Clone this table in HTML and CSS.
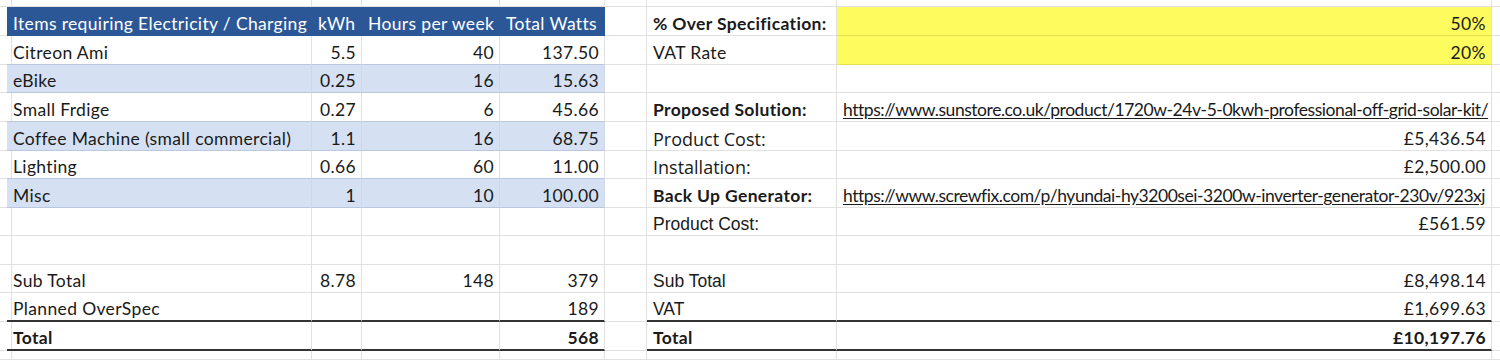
FILE: index.html
```html
<!DOCTYPE html>
<html lang="en">
<head>
<meta charset="utf-8">
<title>Solar sizing</title>
<link rel="stylesheet" href="styles.css">
</head>
<body>
<div class="sheet">
  <div class="row top">
    <div class="c"></div><div class="c"></div><div class="c"></div><div class="c"></div><div class="c"></div><div class="c"></div><div class="c"></div><div class="c"></div><div class="c"></div>
  </div>
  <div class="row h29">
    <div class="c"></div>
    <div class="c hd">Items requiring Electricity / Charging</div>
    <div class="c hd">kWh</div>
    <div class="c hd">Hours per week</div>
    <div class="c hd">Total Watts</div>
    <div class="c"></div>
    <div class="c b">% Over Specification:</div>
    <div class="c n yel">50%</div>
    <div class="c"></div>
  </div>
  <div class="row h29">
    <div class="c"></div>
    <div class="c wt">Citreon Ami</div>
    <div class="c wt n">5.5</div>
    <div class="c wt n">40</div>
    <div class="c wt n">137.50</div>
    <div class="c"></div>
    <div class="c">VAT Rate</div>
    <div class="c n yel">20%</div>
    <div class="c"></div>
  </div>
  <div class="row h28">
    <div class="c"></div>
    <div class="c band">eBike</div>
    <div class="c band n">0.25</div>
    <div class="c band n">16</div>
    <div class="c band n">15.63</div>
    <div class="c"></div>
    <div class="c"></div>
    <div class="c"></div>
    <div class="c"></div>
  </div>
  <div class="row h29">
    <div class="c"></div>
    <div class="c wt">Small Frdige</div>
    <div class="c wt n">0.27</div>
    <div class="c wt n">6</div>
    <div class="c wt n">45.66</div>
    <div class="c"></div>
    <div class="c b">Proposed Solution:</div>
    <div class="c"><span class="link">https://www.sunstore.co.uk/product/1720w-24v-5-0kwh-professional-off-grid-solar-kit/</span></div>
    <div class="c"></div>
  </div>
  <div class="row h29">
    <div class="c"></div>
    <div class="c band">Coffee Machine (small commercial)</div>
    <div class="c band n">1.1</div>
    <div class="c band n">16</div>
    <div class="c band n">68.75</div>
    <div class="c"></div>
    <div class="c os">Product Cost:</div>
    <div class="c n">£5,436.54</div>
    <div class="c"></div>
  </div>
  <div class="row h28">
    <div class="c"></div>
    <div class="c wt">Lighting</div>
    <div class="c wt n">0.66</div>
    <div class="c wt n">60</div>
    <div class="c wt n">11.00</div>
    <div class="c"></div>
    <div class="c os">Installation:</div>
    <div class="c n">£2,500.00</div>
    <div class="c"></div>
  </div>
  <div class="row h29">
    <div class="c"></div>
    <div class="c band">Misc</div>
    <div class="c band n">1</div>
    <div class="c band n">10</div>
    <div class="c band n">100.00</div>
    <div class="c"></div>
    <div class="c b">Back Up Generator:</div>
    <div class="c"><span class="link">https://www.screwfix.com/p/hyundai-hy3200sei-3200w-inverter-generator-230v/923xj</span></div>
    <div class="c"></div>
  </div>
  <div class="row h28">
    <div class="c"></div><div class="c"></div><div class="c"></div><div class="c"></div><div class="c"></div><div class="c"></div>
    <div class="c ar">Product Cost:</div>
    <div class="c n">£561.59</div>
    <div class="c"></div>
  </div>
  <div class="row h29">
    <div class="c"></div><div class="c"></div><div class="c"></div><div class="c"></div><div class="c"></div><div class="c"></div><div class="c"></div><div class="c"></div><div class="c"></div>
  </div>
  <div class="row h28">
    <div class="c"></div>
    <div class="c">Sub Total</div>
    <div class="c n">8.78</div>
    <div class="c n">148</div>
    <div class="c n">379</div>
    <div class="c"></div>
    <div class="c ar">Sub Total</div>
    <div class="c n">£8,498.14</div>
    <div class="c"></div>
  </div>
  <div class="row h29">
    <div class="c"></div>
    <div class="c thick">Planned OverSpec</div>
    <div class="c thick"></div>
    <div class="c thick"></div>
    <div class="c n thick">189</div>
    <div class="c"></div>
    <div class="c ar thick">VAT</div>
    <div class="c n thick">£1,699.63</div>
    <div class="c"></div>
  </div>
  <div class="row h29">
    <div class="c"></div>
    <div class="c b thick">Total</div>
    <div class="c thick"></div>
    <div class="c thick"></div>
    <div class="c n b thick">568</div>
    <div class="c"></div>
    <div class="c b thick">Total</div>
    <div class="c n b thick">£10,197.76</div>
    <div class="c"></div>
  </div>
  <div class="row rest">
    <div class="c"></div><div class="c"></div><div class="c"></div><div class="c"></div><div class="c"></div><div class="c"></div><div class="c"></div><div class="c"></div><div class="c"></div>
  </div>
</div>
</body>
</html>
```

FILE: styles.css
```css
html, body {
  margin: 0;
  padding: 0;
  background: #ffffff;
}

.sheet {
  width: 1500px;
  height: 360px;
  overflow: hidden;
  font-family: Lato, "Open Sans", sans-serif;
  font-size: 17.5px;
  letter-spacing: 0.35px;
  color: #1a1a1a;
}

.row {
  display: grid;
  grid-template-columns: 7px 305px 50px 138px 105px 42px 190px 655px 8px;
}

.row.top { height: 7px; }
.row.h29 { height: 29px; }
.row.h28 { height: 28px; }
.row.rest { height: 9px; }

.c {
  box-sizing: border-box;
  border-right: 1px solid #e1e1e1;
  border-bottom: 1px solid #e1e1e1;
  padding: 0 5px 1px 6px;
  display: flex;
  align-items: flex-end;
  white-space: nowrap;
  overflow: hidden;
  line-height: 20px;
}

.n { justify-content: flex-end; }
.b { font-weight: 700; }
.os { font-family: "Open Sans", sans-serif; font-size: 18px; letter-spacing: 0; }
.ar { font-family: "Liberation Sans", Arial, sans-serif; font-size: 17.5px; letter-spacing: 0; }

.hd {
  background: #2b5797;
  color: #ffffff;
  border-right-color: #2b5797;
  border-bottom-color: #2b5797;
}

.wt {
  border-bottom-color: #b9c8de;
}

.band {
  background: #d5e1f2;
  border-bottom-color: #b9c8de;
  border-right-color: #cdd8e8;
}

.yel {
  background: #fdfc5e;
  border-bottom-color: #e2e152;
}

.thick {
  border-bottom: 2px solid #333333;
}

.link {
  text-decoration: underline;
  text-underline-offset: 2px;
  letter-spacing: -0.45px;
  color: #1a1a1a;
}
```
